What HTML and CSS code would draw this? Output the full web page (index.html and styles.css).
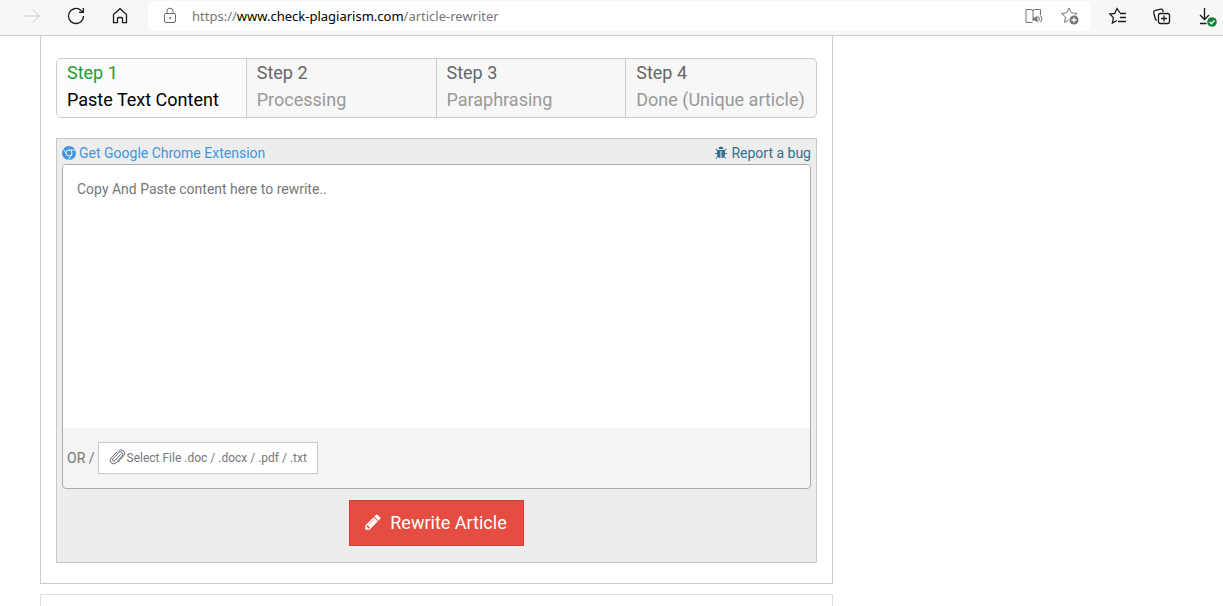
FILE: index.html
```
<!DOCTYPE html>
<html lang="en">
<head>
    <meta charset="UTF-8">
    <title>Article Rewriter</title>
    <link rel="stylesheet" href="styles.css">
</head>
<body>

    <!-- Browser bar -->
    <header class="toolbar">
        <button class="tool forward" aria-label="Forward" disabled>
            <svg width="18" height="18" viewBox="0 0 18 18"><path d="M1 9h15.500M9.500 2.500L16.500 9l-7 6.500"/></svg>
        </button>
        <button class="tool" aria-label="Refresh">
            <svg width="18" height="18" viewBox="0 0 18 18"><path class="thick" d="M16.500 9a7.500 7.500 0 1 1-2.500-5.600l1.500 1.500M16.300 1v4.300h-4.300"/></svg>
        </button>
        <button class="tool" aria-label="Home">
            <svg width="18" height="18" viewBox="0 0 18 18"><path class="thick" d="M2.500 7.500L9 1.700l6.500 5.800v8.200h-4v-4.200a1 1 0 0 0-1-1h-3a1 1 0 0 0-1 1v4.200h-4z"/></svg>
        </button>
        <div class="address">
            <svg width="18" height="18" viewBox="0 0 18 18"><rect x="3.500" y="6.500" width="11" height="9" rx="1.500"/><path d="M6 6.500V4.200a3 3 0 0 1 6 0v2.300"/><circle class="solid" cx="9" cy="11" r="1"/></svg>
            <span class="url">https://<b>www.check-plagiarism.com</b>/article-rewriter</span>
            <button class="tool inner" aria-label="Read aloud">
                <svg width="20" height="18" viewBox="0 0 20 18"><path d="M8.500 15.500h-6.500V2.500h5q2 0 2 1.500v10M9 4q0-1.500 2-1.500h5.500V8M14.500 9.500q2 2.500 0 5M16.500 8.500q3 3.500 0 7"/><path class="solid" d="M9 10.500h2l2.500-2v7l-2.500-2h-2z"/></svg>
            </button>
            <button class="tool inner" aria-label="Add to favorites">
                <svg width="18" height="18" viewBox="0 0 18 18"><path d="M7.500 13l-4 2.500 1-5.500-4-3.500 5.300-.7L8 1l2.500 4.800 5.500.7-2 2"/><circle class="solid" cx="13" cy="13" r="4.500"/><path class="plus" d="M13 10.500v5M10.500 13h5"/></svg>
            </button>
        </div>
        <div class="tools">
            <button class="tool" aria-label="Favorites">
                <svg width="18" height="18" viewBox="0 0 18 18"><path class="thick" d="M11 6L8 1.500 5.700 6.300.800 7l3.600 3.600-1 5.400L8 13.500M17 6.500h-6M17 10.500h-6M17 14.500H9"/></svg>
            </button>
            <button class="tool" aria-label="Collections">
                <svg width="18" height="18" viewBox="0 0 18 18"><path class="thick" d="M4 13.500l-1.500-1L.700 5.500q-.3-1.500 1-2l6-1.300q1.500-.2 2 1l.5 1.800"/><rect class="thick" x="5.500" y="6.500" width="11" height="10" rx="2"/><path class="thick" d="M11 8.500v6M8 11.500h6"/></svg>
            </button>
            <button class="tool" aria-label="Downloads">
                <svg width="18" height="18" viewBox="0 0 18 18"><path class="thick" d="M5.500 1v11.500M1 8l4.500 4.500L10 8M1 16.500h6.500"/><circle class="done" cx="13" cy="15" r="4.800"/><path class="plus" d="M10.700 15l1.700 1.700 3-3.200"/></svg>
            </button>
        </div>
    </header>

    <main class="content">
        <section class="card">
            <ol class="steps">
                <li class="active"><strong>Step 1</strong><span>Paste Text Content</span></li>
                <li><strong>Step 2</strong><span>Processing</span></li>
                <li><strong>Step 3</strong><span>Paraphrasing</span></li>
                <li><strong>Step 4</strong><span>Done (Unique article)</span></li>
            </ol>

            <form class="panel">
                <div class="links">
                    <a href="#" class="chrome">
                        <svg width="14" height="14" viewBox="0 0 14 14"><circle cx="7" cy="7" r="7"/><g class="lines"><circle cx="7" cy="7" r="3"/><path d="M7 4h6.400M4.400 8.500L1.500 3.300M9.600 8.500L6.400 14"/></g></svg>
                        Get Google Chrome Extension
                    </a>
                    <a href="#" class="bug">
                        <svg width="14" height="14" viewBox="0 0 1792 1792"><path d="M1696 960q0 26-19 45t-45 19h-224q0 171-67 290l208 209q19 19 19 45t-19 45q-18 19-45 19t-45-19l-198-197q-5 5-15 13t-42 28.500-65 36.500-82 29-97 13v-896h-128v896q-51 0-101.500-13.500t-87-33-66-39-43.500-32.500l-15-14-183 207q-20 21-48 21-24 0-43-16-19-18-20.500-44.500t15.500-46.500l202-227q-58-114-58-274h-224q-26 0-45-19t-19-45 19-45 45-19h224v-294l-173-173q-19-19-19-45t19-45 45-19 45 19l173 173h844l173-173q19-19 45-19t45 19 19 45-19 45l-173 173v294h224q26 0 45 19t19 45zm-480-576h-640q0-133 93.500-226.500t226.500-93.500 226.500 93.500 93.500 226.500z"/></svg>
                        Report a bug
                    </a>
                </div>

                <div class="editor">
                    <textarea aria-label="Content" placeholder="Copy And Paste content here to rewrite.."></textarea>
                    <div class="upload">
                        <span>OR /</span>
                        <button type="button" class="file">
                            <svg width="18" height="18" viewBox="0 0 18 18"><path d="M12.500 5.500L6.800 11.700a1.300 1.300 0 0 1-2-1.800L10.700 3.700a2.300 2.300 0 0 1 3.500 3.200L8 13.700a3.300 3.300 0 0 1-5-4.500l6.200-6.500M10.500 2.200a3.400 3.400 0 0 1 5.300 4.500L9.500 13.500" /></svg>
                            Select File .doc / .docx / .pdf / .txt
                        </button>
                    </div>
                </div>

                <button type="button" class="rewrite">
                    <svg width="18" height="18" viewBox="0 0 1792 1792"><path d="M491 1536l91-91-235-235-91 91v107h128v128h107zM1014 608q0-22-22-22-10 0-17 7l-542 542q-7 7-7 17 0 22 22 22 10 0 17-7l542-542q7-7 7-17zm-54-192l416 416-832 832h-416v-416zm683 96q0 53-37 90l-166 166-416-416 166-165q36-38 90-38 53 0 91 38l235 234q37 39 37 91z"/></svg>
                    Rewrite Article
                </button>
            </form>
        </section>

        <section class="card next"></section>
    </main>

</body>
</html>
```

FILE: styles.css
```
* {
    box-sizing: border-box;
}

body {
    margin: 0;
    height: 100vh;
    overflow: hidden;
    display: flex;
    flex-direction: column;
    background: #fff;
    font-family: Roboto, sans-serif;
    font-size: 14px;
    color: #777;
}

button {
    font-family: inherit;
    cursor: pointer;
}

a {
    text-decoration: none;
}

/* Browser bar */
.toolbar {
    display: flex;
    align-items: center;
    flex-shrink: 0;
    height: 36px;
    padding: 0 6px 3px 23px;
    background: #f7f7f7;
    border-bottom: 1px solid #ccc;
}

.tool {
    display: flex;
    flex-shrink: 0;
    margin-right: 26px;
    padding: 0;
    border: none;
    background: none;
    color: #1b1b1b;
}

.forward {
    color: #ccc;
}

.toolbar svg {
    flex-shrink: 0;
    overflow: visible;
    fill: none;
    stroke: currentColor;
    stroke-width: 1;
}

.toolbar .thick {
    stroke-width: 1.3;
}

.toolbar .solid {
    fill: currentColor;
    stroke: none;
}

.toolbar .plus {
    stroke: #fff;
    stroke-width: 1.3;
}

.toolbar .done {
    fill: #16853c;
    stroke: none;
}

.address {
    flex: 1;
    display: flex;
    align-items: center;
    height: 30px;
    margin-right: 19px;
    margin-left: -7px;
    padding: 0 11px 0 13px;
    background: #fff;
    border-radius: 4px;
    color: #6b6b6b;
}

.url {
    flex: 1;
    margin-left: 13px;
    font-family: "Noto Sans", sans-serif;
    font-size: 13px;
    white-space: nowrap;
    color: #767676;
}

.url b {
    font-weight: normal;
    color: #000;
}

.inner {
    margin-right: 17px;
    color: #767676;
}

.inner:last-child {
    margin-right: 0;
}

.tools {
    display: flex;
}

.tools .tool:last-child {
    margin-left: 2px;
    margin-right: 0;
}

/* Page */
.content {
    flex: 1;
    display: flex;
    flex-direction: column;
    gap: 10px;
    width: 100%;
    max-width: 833px;
    padding-left: 40px;
}

.card {
    padding: 22px 15px 20px;
    border: 1px solid #ccc;
    border-top: none;
}

.next {
    flex: 1;
    padding: 0;
    border: 1px solid #ddd;
    border-bottom: none;
}

.steps {
    display: grid;
    grid-template-columns: repeat(4, 1fr);
    margin: 0 0 20px;
    padding: 0;
    overflow: hidden;
    list-style: none;
    background: #f7f7f7;
    border: 1px solid #ccc;
    border-radius: 5px;
    font-size: 18px;
    line-height: 27px;
    color: #999;
}

.steps li {
    padding: 0 10px 4px;
    border-right: 1px solid #ccc;
    white-space: nowrap;
}

.steps li:last-child {
    border-right: none;
}

.steps strong {
    display: block;
    font-weight: normal;
    color: #666;
}

.steps .active {
    background: #fcfcfc;
    color: #000;
}

.steps .active strong {
    color: #1b9e31;
}

/* Rewriter form */
.panel {
    display: flex;
    flex-direction: column;
    padding: 5px 5px 16px;
    background: #ededed;
    border: 1px solid #c8c8c8;
}

.links {
    display: flex;
    justify-content: space-between;
    padding-bottom: 2px;
    line-height: 18px;
}

.links a {
    display: flex;
    align-items: center;
    gap: 3px;
}

.links svg {
    fill: currentColor;
}

.chrome {
    color: #4296dc;
}

.chrome .lines {
    fill: none;
    stroke: #ededed;
}

.bug {
    color: #31708f;
}

.editor {
    overflow: hidden;
    background: #f4f4f4;
    border: 1px solid #aaa;
    border-radius: 4px;
}

.editor textarea {
    display: block;
    width: 100%;
    height: 263px;
    padding: 14px;
    border: none;
    outline: none;
    resize: none;
    font-family: inherit;
    font-size: 14px;
    line-height: 20px;
}

.editor textarea::placeholder {
    color: #777;
}

.upload {
    display: flex;
    align-items: center;
    gap: 3px;
    height: 60px;
    padding: 0 4px;
}

.file {
    display: flex;
    align-items: center;
    gap: 1px;
    height: 32px;
    padding: 0 10px 0 9px;
    background: #fff;
    border: 1px solid #ccc;
    font-size: 12px;
    color: #777;
}

.file svg {
    fill: none;
    stroke: #666;
}

.rewrite {
    display: flex;
    align-items: center;
    align-self: center;
    gap: 8px;
    height: 46px;
    margin-top: 11px;
    padding: 0 16px 2px 14px;
    background: #e64d42;
    border: 1px solid #cf3f36;
    font-size: 18px;
    color: #fff;
}

.rewrite svg {
    fill: currentColor;
}
```
